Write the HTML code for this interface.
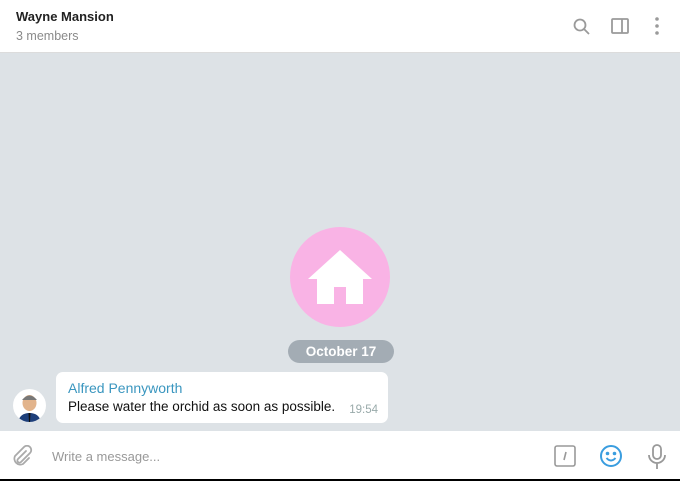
<!DOCTYPE html>
<html><head><style>
*{margin:0;padding:0;box-sizing:border-box}
body{width:680px;height:481px;overflow:hidden;font-family:"Liberation Sans","DejaVu Sans",sans-serif;background:#000;position:relative}
.hdr{position:absolute;left:0;top:0;width:680px;height:53px;background:#fff;border-bottom:1px solid #dcdcdc}
.t{position:absolute;left:16px;top:9px;font-size:13px;font-weight:bold;color:#222}
.s{position:absolute;left:16px;top:29px;font-size:12.5px;color:#8a8a8a}
.chat{position:absolute;left:0;top:53px;width:680px;height:378px;background:#dde2e6}
.circ{position:absolute;left:290px;top:227px;width:100px;height:100px;border-radius:50%;background:#f9b3e5}
.date{position:absolute;left:288px;top:340px;width:106px;height:23px;border-radius:12px;background:#a3acb4;color:#fff;font-size:13.5px;font-weight:bold;text-align:center;line-height:23px}
.bub{position:absolute;left:56px;top:372px;width:332px;height:51px;background:#fff;border-radius:7px}
.n{position:absolute;left:12px;top:8px;font-size:14px;color:#3a96bf}
.m{position:absolute;left:12px;top:27px;font-size:13.5px;color:#111}
.tm{position:absolute;right:10px;top:32px;font-size:11.5px;color:#9aa}
.av{position:absolute;left:13px;top:389px;width:33px;height:33px;border-radius:50%;background:#fff;overflow:hidden}
.inp{position:absolute;left:0;top:431px;width:680px;height:48px;background:#fff}
.ph{position:absolute;left:52px;top:18px;font-size:13px;color:#999}
</style></head><body>
<div class="hdr"><div class="t">Wayne Mansion</div><div class="s">3 members</div>
<svg style="position:absolute;left:572px;top:17px" width="20" height="20" viewBox="0 0 20 20" fill="none" stroke="#9a9a9a" stroke-width="1.8"><circle cx="8" cy="8" r="5.5"/><path d="M12 12l5 5"/></svg>
<svg style="position:absolute;left:610px;top:16px" width="20" height="20" viewBox="0 0 20 20" fill="none" stroke="#9a9a9a" stroke-width="1.8"><rect x="2" y="3" width="16" height="14" rx="1"/><path d="M12 3v14"/></svg>
<svg style="position:absolute;left:652px;top:16px" width="10" height="20" viewBox="0 0 10 20" fill="#9a9a9a"><circle cx="5" cy="3" r="1.8"/><circle cx="5" cy="10" r="1.8"/><circle cx="5" cy="17" r="1.8"/></svg>
</div>
<div class="chat">
</div>
<div class="circ"><svg width="100" height="100" viewBox="0 0 100 100"><path d="M50 23L18 52h9v25h17V60h12v17h17V52h9z" fill="#fff"/></svg></div>
<div class="date">October 17</div>
<div class="bub"><div class="n">Alfred Pennyworth</div><div class="m">Please water the orchid as soon as possible.</div><div class="tm">19:54</div></div>
<div class="av"><svg width="33" height="33" viewBox="0 0 33 33"><ellipse cx="16.5" cy="14" rx="7" ry="8" fill="#e2b48c"/><path d="M9 11q7.5-9 15 0" fill="#777"/><path d="M5 33q2-9 11.5-9 9.5 0 11.5 9z" fill="#1e3f7a"/><path d="M15.5 24h2l-.5 9h-1z" fill="#111"/></svg></div>
<div class="inp"><div class="ph">Write a message...</div>
<svg style="position:absolute;left:11px;top:14px" width="22" height="22" viewBox="0 0 22 22" fill="none" stroke="#aaa" stroke-width="1.8" stroke-linecap="round"><path d="M15 6l-8 8a2 2 0 0 0 3 3l9-9a4 4 0 0 0-6-6L4 11a6 6 0 0 0 8 8l6-6"/></svg>
<svg style="position:absolute;left:554px;top:14px" width="22" height="22" viewBox="0 0 22 22" fill="none" stroke="#999" stroke-width="1.6"><rect x="1" y="1" width="20" height="20" rx="2"/><path d="M12 7l-2 8"/></svg>
<svg style="position:absolute;left:599px;top:13px" width="24" height="24" viewBox="0 0 24 24" fill="none" stroke="#3a9ddf" stroke-width="2"><circle cx="12" cy="12" r="10"/><path d="M7.5 14q4.5 5 9 0"/><circle cx="8.5" cy="9.5" r=".8" fill="#3a9ddf"/><circle cx="15.5" cy="9.5" r=".8" fill="#3a9ddf"/></svg>
<svg style="position:absolute;left:647px;top:13px" width="20" height="26" viewBox="0 0 20 26" fill="none" stroke="#999" stroke-width="1.8"><rect x="6" y="1" width="8" height="14" rx="4"/><path d="M2 11a8 8 0 0 0 16 0M10 19v6"/></svg>
</div>
</body></html>
